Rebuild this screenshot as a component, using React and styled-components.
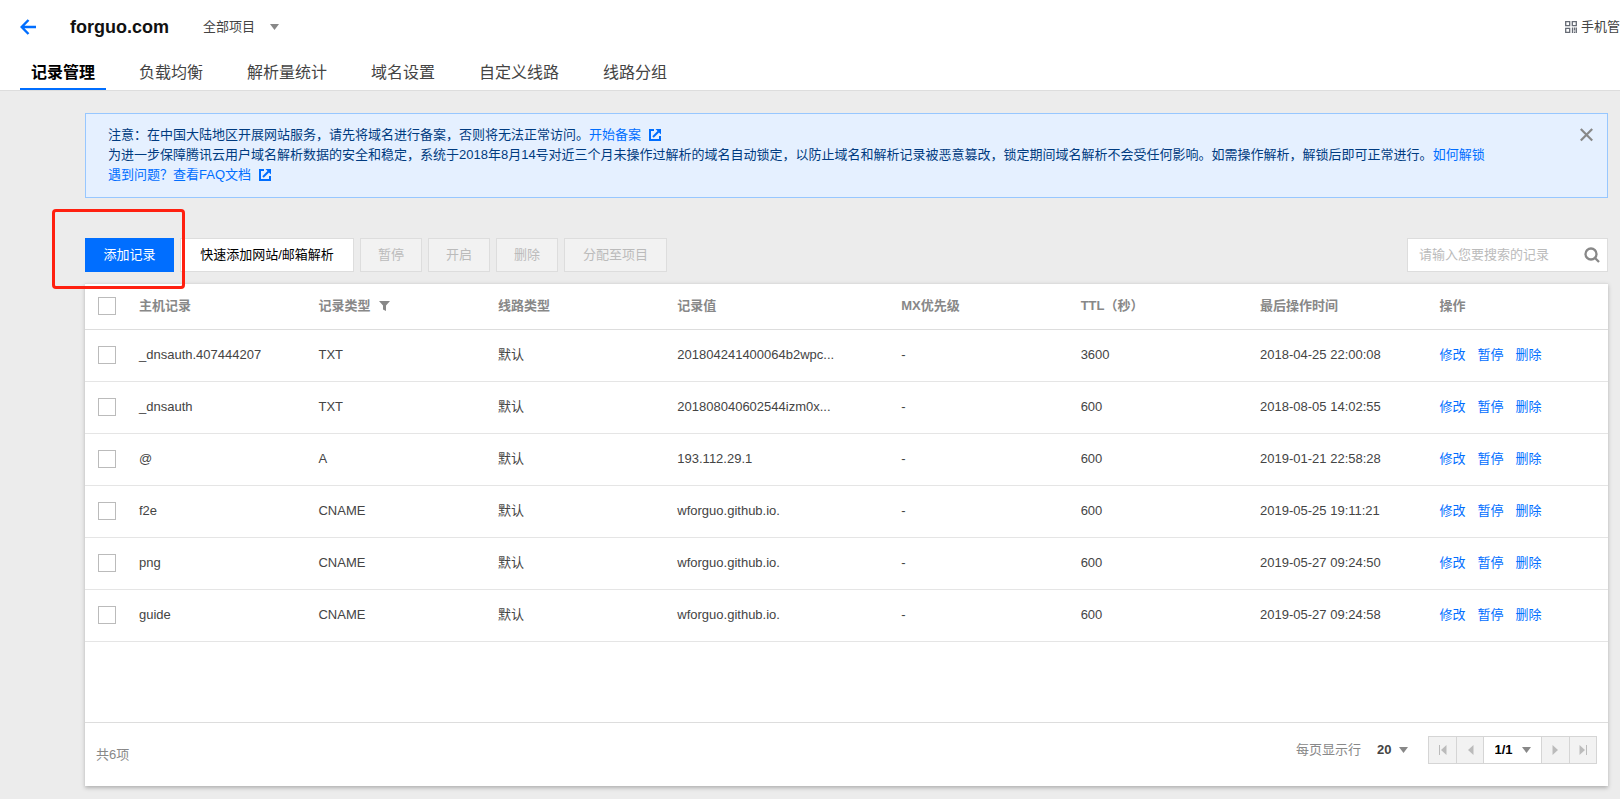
import React from 'react';
import styled, { createGlobalStyle } from 'styled-components';

const Global = createGlobalStyle`
  *, *::before, *::after { box-sizing: border-box; }
  body {
    margin: 0;
    background: #ececec;
    color: #444;
    font: 13px/20px "Liberation Sans", "Noto Sans CJK SC", sans-serif;
  }
  button, input, select { font: inherit; color: inherit; margin: 0; }
  a { color: #006eff; text-decoration: none; }
  svg { display: block; flex: none; }
`;

const Header = styled.header`
  background: #fff;
  border-bottom: 1px solid #ddd;
`;

const TitleRow = styled.div`
  display: flex;
  align-items: center;
  height: 54px;
  padding-left: 20px;
`;

const IconButton = styled.button`
  display: flex;
  align-items: center;
  justify-content: center;
  border: 0;
  padding: 0;
  background: none;
  cursor: pointer;
`;

const Title = styled.h1`
  margin: 0 34px 0 33px;
  color: #111;
  font-size: 18px;
  line-height: 24px;
`;

const SelectBox = styled.span`
  position: relative;
  display: inline-flex;
  align-items: center;
  height: 100%;
  font-weight: ${(p) => (p.$bold ? 'bold' : 'normal')};
  color: ${(p) => p.$color || '#444'};
  & > select {
    appearance: none;
    width: 100%;
    height: 100%;
    padding: 0 ${(p) => p.$room || 16}px 0 0;
    border: 0;
    background: none;
    font-weight: inherit;
  }
  & > svg {
    position: absolute;
    right: 0;
    pointer-events: none;
  }
`;

const Mobile = styled.a`
  display: flex;
  align-items: center;
  gap: 4px;
  margin-left: auto;
  color: #444;
`;

const Tabs = styled.nav`
  display: flex;
  gap: 22px;
  height: 36px;
  padding-left: 20px;
`;

const Tab = styled.a`
  padding: 0 11px;
  font-size: 16px;
  line-height: 37px;
  color: ${(p) => (p.$active ? '#000' : '#444')};
  font-weight: ${(p) => (p.$active ? 'bold' : 'normal')};
  box-shadow: ${(p) => (p.$active ? 'inset 0 -2px #006eff' : 'none')};
`;

const Main = styled.main`
  padding: 22px 12px 13px 85px;
`;

const Notice = styled.section`
  display: flex;
  align-items: flex-start;
  justify-content: space-between;
  padding: 11px 14px 12px 22px;
  border: 1px solid #97c7ff;
  background: #e5f0ff;
  color: #003b80;
  p { margin: 0; }
  a { display: inline-flex; align-items: center; gap: 8px; }
`;

const Toolbar = styled.div`
  display: flex;
  gap: 6px;
  margin: 40px 0 11px;
`;

const Button = styled.button`
  width: ${(p) => p.$width}px;
  height: 34px;
  padding: 0;
  border: 1px solid ${(p) => (p.$primary ? '#006eff' : '#ddd')};
  background: ${(p) => (p.$primary ? '#006eff' : '#fff')};
  color: ${(p) => (p.$primary ? '#fff' : '#000')};
  cursor: pointer;
  &:disabled {
    background: #f2f2f2;
    color: #bbb;
    cursor: default;
  }
`;

const Highlighted = styled.span`
  position: relative;
  &::after {
    content: "";
    position: absolute;
    z-index: 1;
    top: -29px;
    left: -33px;
    width: 133px;
    height: 80px;
    border: 3px solid #ff2010;
    border-radius: 4px;
    pointer-events: none;
  }
`;

const Search = styled.form`
  display: flex;
  align-items: center;
  width: 201px;
  height: 34px;
  margin-left: auto;
  padding: 0 7px 0 11px;
  border: 1px solid #ddd;
  background: #fff;
  input {
    flex: 1;
    min-width: 0;
    padding: 0;
    border: 0;
    outline: 0;
    background: none;
  }
  input::placeholder { color: #bbb; opacity: 1; }
`;

const Card = styled.section`
  border-top: 1px solid #ddd;
  background: #fff;
  box-shadow: 0 2px 4px rgba(0, 0, 0, 0.25);
`;

const TableArea = styled.div`
  min-height: 438px;
`;

const Table = styled.table`
  width: 100%;
  border-collapse: separate;
  border-spacing: 0;
  table-layout: fixed;
`;

const HeadCell = styled.th`
  width: ${(p) => p.$width || 'auto'};
  height: 46px;
  padding: 0 11px 1px;
  border-bottom: 1px solid #ddd;
  color: #888;
  text-align: left;
`;

const HeadLabel = styled.span`
  display: flex;
  align-items: center;
  gap: 9px;
`;

const Cell = styled.td`
  height: 52px;
  padding: 0 11px 2px;
  border-bottom: 1px solid #e5e5e5;
`;

const CheckCell = styled(Cell)`
  padding: 0 0 2px 13px;
`;

const CheckHead = styled(HeadCell)`
  padding: 0 0 2px 13px;
`;

const Checkbox = styled.input`
  appearance: none;
  display: block;
  width: 18px;
  height: 18px;
  border: 1px solid #bbb;
  background: #fff;
  &:checked { background: #006eff; }
`;

const Actions = styled.div`
  display: flex;
  gap: 12px;
`;

const Footer = styled.footer`
  display: flex;
  align-items: center;
  justify-content: space-between;
  padding-left: 11px;
  border-top: 1px solid #ddd;
  color: #888;
`;

const Paging = styled.div`
  display: flex;
  align-items: center;
  padding: 13px 11px 22px 0;
`;

const PageSize = styled.label`
  display: flex;
  align-items: center;
  gap: 16px;
  height: 28px;
  margin-right: 20px;
`;

const Pager = styled.div`
  display: flex;
  height: 28px;
  border: 1px solid #d5d5d5;
`;

const PageButton = styled(IconButton)`
  width: 27px;
  background: #f2f2f2;
  color: #bbb;
  & + & { border-left: 1px solid #d5d5d5; }
`;

const PageNumber = styled.div`
  display: flex;
  justify-content: center;
  width: 59px;
  border: solid #d5d5d5;
  border-width: 0 1px;
`;

const Caret = () => (
  <svg width="9" height="6" viewBox="0 0 9 6" aria-hidden="true"><path d="M0 0h9L4.500 6z" fill="#888" /></svg>
);

const External = () => (
  <svg width="12" height="12" viewBox="0 0 12 12" fill="none" stroke="#006eff" strokeWidth="2" aria-hidden="true">
    <path d="M5 1H1v10h10V7" />
    <path d="M4 8l5.500-5.500" />
    <path d="M6.500 0H12v5.500z" fill="#006eff" stroke="none" />
  </svg>
);

const Arrow = ({ flip, bar }) => (
  <svg width="8" height="10" viewBox="0 0 8 10" fill="currentColor" transform={flip ? 'scale(-1 1)' : undefined} aria-hidden="true">
    {bar && <path d="M0 0h1v10H0z" />}
    <path d="M7.500 0v10L2 5z" />
  </svg>
);

const columns = [
  ['主机记录'],
  ['记录类型'],
  ['线路类型'],
  ['记录值', '14.7%'],
  ['MX优先级'],
  ['TTL（秒）'],
  ['最后操作时间'],
  ['操作'],
];

const records = [
  ['_dnsauth.407444207', 'TXT', '默认', '201804241400064b2wpc...', '-', '3600', '2018-04-25 22:00:08'],
  ['_dnsauth', 'TXT', '默认', '201808040602544izm0x...', '-', '600', '2018-08-05 14:02:55'],
  ['@', 'A', '默认', '193.112.29.1', '-', '600', '2019-01-21 22:58:28'],
  ['f2e', 'CNAME', '默认', 'wforguo.github.io.', '-', '600', '2019-05-25 19:11:21'],
  ['png', 'CNAME', '默认', 'wforguo.github.io.', '-', '600', '2019-05-27 09:24:50'],
  ['guide', 'CNAME', '默认', 'wforguo.github.io.', '-', '600', '2019-05-27 09:24:58'],
];

const tabs = ['记录管理', '负载均衡', '解析量统计', '域名设置', '自定义线路', '线路分组'];

export default function App() {
  return (
    <>
      <Global />
      <Header>
        <TitleRow>
          <IconButton aria-label="返回">
            <svg width="17" height="16" viewBox="0 0 17 16" fill="none" stroke="#006eff" strokeWidth="2.400">
              <path d="M8.500 1L1.700 8l6.800 7M2 8h14" />
            </svg>
          </IconButton>
          <Title>forguo.com</Title>
          <SelectBox $room={23}>
            <select aria-label="项目"><option>全部项目</option></select>
            <Caret />
          </SelectBox>
          <Mobile href="#mobile">
            <svg width="12" height="12" viewBox="0 0 12 12" fill="none" stroke="#666b75" strokeWidth="1.300" aria-hidden="true">
              <path d="M.7.700h4v4h-4zM7.300.700h4v4h-4zM.7 7.300h4v4h-4zM7.500 6.500V12M9.500 6.500v3M9.500 10.500V12M11.300 6.500V12" />
            </svg>
            手机管
          </Mobile>
        </TitleRow>
        <Tabs>
          {tabs.map((t, i) => <Tab key={t} href={`#tab-${i}`} $active={i === 0}>{t}</Tab>)}
        </Tabs>
      </Header>
      <Main>
        <Notice>
          <div>
            <p>注意：在中国大陆地区开展网站服务，请先将域名进行备案，否则将无法正常访问。<a href="#beian">开始备案<External /></a></p>
            <p>为进一步保障腾讯云用户域名解析数据的安全和稳定，系统于2018年8月14号对近三个月未操作过解析的域名自动锁定，以防止域名和解析记录被恶意篡改，锁定期间域名解析不会受任何影响。如需操作解析，解锁后即可正常进行。<a href="#unlock">如何解锁</a></p>
            <p><a href="#faq">遇到问题？查看FAQ文档<External /></a></p>
          </div>
          <IconButton aria-label="关闭">
            <svg width="13" height="20" viewBox="0 0 13 20" fill="none" stroke="#888" strokeWidth="2.200">
              <path d="M.8 4l11.400 11.500M12.200 4L.8 15.500" />
            </svg>
          </IconButton>
        </Notice>
        <Toolbar>
          <Highlighted><Button $primary $width={89}>添加记录</Button></Highlighted>
          <Button $width={174}>快速添加网站/邮箱解析</Button>
          <Button $width={62} disabled>暂停</Button>
          <Button $width={62} disabled>开启</Button>
          <Button $width={62} disabled>删除</Button>
          <Button $width={103} disabled>分配至项目</Button>
          <Search>
            <input aria-label="搜索记录" placeholder="请输入您要搜索的记录" />
            <IconButton type="button" aria-label="搜索">
              <svg width="16" height="16" viewBox="0 0 16 16" fill="none" stroke="#888" strokeWidth="2.300">
                <circle cx="7" cy="7" r="5.500" /><path d="M11 11l4 4" />
              </svg>
            </IconButton>
          </Search>
        </Toolbar>
        <Card>
          <TableArea>
            <Table>
              <thead>
                <tr>
                  <CheckHead $width="43px"><Checkbox type="checkbox" aria-label="全选" /></CheckHead>
                  {columns.map(([name, width], i) => (
                    <HeadCell key={name} $width={width}>
                      <HeadLabel>
                        {name}
                        {i === 1 && (
                          <IconButton aria-label="筛选">
                            <svg width="11" height="10" viewBox="0 0 11 10" fill="#888"><path d="M0 0h11L7 4.500V10L4 8.500v-4z" /></svg>
                          </IconButton>
                        )}
                      </HeadLabel>
                    </HeadCell>
                  ))}
                </tr>
              </thead>
              <tbody>
                {records.map((r) => (
                  <tr key={r[0]}>
                    <CheckCell><Checkbox type="checkbox" aria-label={r[0]} /></CheckCell>
                    {r.map((value, i) => <Cell key={i}>{value}</Cell>)}
                    <Cell>
                      <Actions>
                        <a href="#edit">修改</a>
                        <a href="#pause">暂停</a>
                        <a href="#delete">删除</a>
                      </Actions>
                    </Cell>
                  </tr>
                ))}
              </tbody>
            </Table>
          </TableArea>
          <Footer>
            <span>共6项</span>
            <Paging>
              <PageSize>
                每页显示行
                <SelectBox $bold>
                  <select><option>20</option></select>
                  <Caret />
                </SelectBox>
              </PageSize>
              <Pager>
                <PageButton aria-label="首页"><Arrow bar /></PageButton>
                <PageButton aria-label="上一页"><Arrow /></PageButton>
                <PageNumber>
                  <SelectBox $bold $color="#000" $room={17}>
                    <select aria-label="页码"><option>1/1</option></select>
                    <Caret />
                  </SelectBox>
                </PageNumber>
                <PageButton aria-label="下一页"><Arrow flip /></PageButton>
                <PageButton aria-label="末页"><Arrow flip bar /></PageButton>
              </Pager>
            </Paging>
          </Footer>
        </Card>
      </Main>
    </>
  );
}
